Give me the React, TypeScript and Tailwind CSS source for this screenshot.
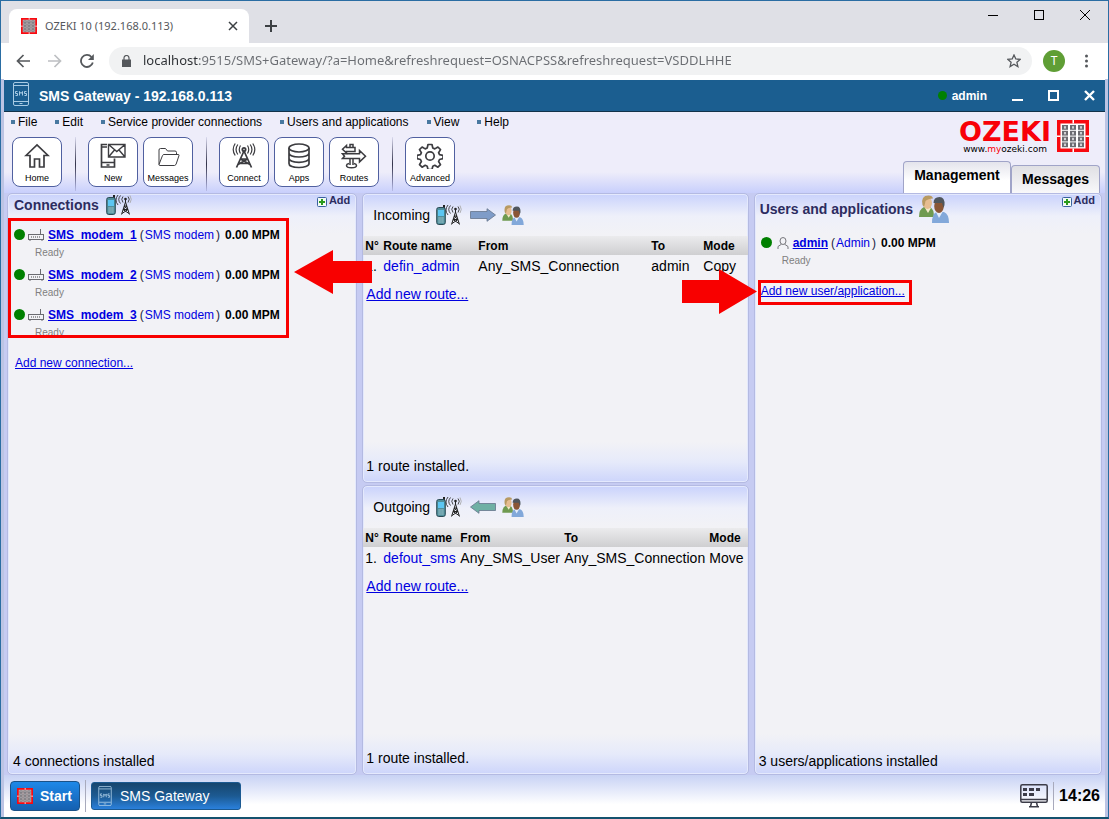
import React from 'react';

const BLUE_LINK = 'text-[#0000e0] underline';

function GridLogo({ className, inner = '#fff' }: { className: string; inner?: string }) {
  const cols = [5, 13, 21];
  const rows = [5, 10.8, 16.6, 22.4];
  return (
    <svg className={className} viewBox="0 0 32 32">
      <rect width="32" height="32" fill="#f80a10" />
      <rect x="3.5" y="3.5" width="25" height="25" fill={inner} />
      <path d="M15.500 0h1.500v3.500h-1.500zM15.500 28.500h1.500V32h-1.500zM0 15.500h3.500v1.500H0zM28.500 15.500H32v1.500h-3.500z" fill="#fff" />
      {rows.map((y) =>
        cols.map((x) => (
          <g key={`${x}-${y}`}>
            <rect x={x} y={y} width="6" height="4.8" fill="#6c6c72" />
            <rect x={x + 2} y={y + 1.2} width="2" height="2.4" fill="#d0d0d4" />
          </g>
        )),
      )}
    </svg>
  );
}

function SmsPhone({ className }: { className: string }) {
  return (
    <svg className={className} viewBox="0 0 16 24" fill="none" stroke="#a9cbe4" strokeWidth="1">
      <rect x="0.5" y="0.5" width="15" height="23" rx="1.5" />
      <path d="M1 3.5h14M1 19.5h14M6.5 21.5h3" />
      <path d="M4.500 9.500h-2v2h2v2h-2M6.500 13.500v-4l1.500 2 1.500-2v4M13.500 9.500h-2v2h2v2h-2" />
    </svg>
  );
}

function AntennaIcon() {
  return (
    <svg className="h-5 w-[26px] shrink-0" viewBox="0 0 26 20" fill="none">
      <path d="M8 0v4" stroke="#222" strokeWidth="2" />
      <rect x="0.700" y="2.500" width="8.600" height="17" rx="2" fill="#4f8f9c" stroke="#2b4a55" />
      <rect x="2" y="5" width="6" height="6" fill="#5cc6f2" />
      <path d="M2.500 13h5M2.500 15h5M2.500 17h5" stroke="#c7dde0" strokeDasharray="1.200 0.700" />
      <path d="M17 1.500q-2.500 2.500 0 6M14.500 0.500q-3.500 4 0 8M12 0q-4 5 0 10M22 1.500q2.500 2.500 0 6" stroke="#333" strokeWidth="0.900" />
      <path d="M24 .5q2.500 4 0 7.500" stroke="#aaa" strokeWidth="0.900" />
      <path d="M19.500 3v4M19.500 7l-4 12.500M19.500 7l4 12.500M18 11h3M17 14.500h5M18 11l4 3.500-6 4M21 11l-4 3.500 6 4" stroke="#222" strokeWidth="1" />
      <circle cx="19.500" cy="4" r="1.300" fill="#222" />
    </svg>
  );
}

function PeopleIcon({ className }: { className: string }) {
  return (
    <svg className={className} viewBox="0 0 30 28">
      <path d="M0 22q0-8 5-10h6q4 2 4 10z" fill="#6f9a50" />
      <path d="M6 13l3 5 3-5z" fill="#f3e9c8" />
      <ellipse cx="8.500" cy="8" rx="4.500" ry="6" fill="#e6bd91" />
      <path d="M3.500 10q-2-9.500 6-9.500 4 0 4.500 3-5 0-7.500 2.500-.5 3-1.500 6z" fill="#b89a62" />
      <path d="M13 28q0-10 5-11h7q5 2 5 11z" fill="#82a8da" />
      <path d="M17 17l3 6 3.500-6z" fill="#e6eefb" />
      <ellipse cx="20" cy="11" rx="4.800" ry="7" fill="#8a5636" />
      <path d="M14.500 8q0-6 6-6 5.500 0 5 8l-1 3-1.500-5q-5 0-8.500 0z" fill="#50565c" />
    </svg>
  );
}

function FlowArrow({ color, left }: { color: string; left?: boolean }) {
  return (
    <svg className="h-3.5 w-[26px] shrink-0" viewBox="0 0 26 14">
      <path
        d={left ? 'M.5 7L9 .7V3.500h16.500v7H9v2.800z' : 'M25.500 7L17 .7V3.500H.5v7H17v2.800z'}
        fill={color}
        stroke="#64748b"
        strokeWidth="0.800"
      />
    </svg>
  );
}

function ModemIcon() {
  return (
    <svg className="h-3 w-4 shrink-0" viewBox="0 0 16 12" fill="none" stroke="#6b6b70">
      <rect x="0.500" y="5.500" width="15" height="5" />
      <path d="M12.500 0v5M2 11v1M14 11v1" />
      <path d="M3 8h10" stroke="#444" strokeDasharray="1 1" />
    </svg>
  );
}

const drawings: Record<string, React.ReactNode> = {
  Home: <path d="M2 12.500L13 2l11 10.500h-4V24h-4.500v-8h-5v8H6V12.500z" />,
  New: (
    <>
      <path d="M7 1.500H1.500v22.500h13V15.500M1.500 19.500h13M6.500 22h3M1.500 4H7" />
      <path d="M8.500 1.500h16.500v12.500H8.500zM8.500 1.500l8.300 7 8.200-7M8.500 14l6-7M25 14l-6-7" strokeWidth="1.400" />
    </>
  ),
  Messages: (
    <path d="M4 21.500V7q0-1.500 1.500-1.500h5l2 2.500h7.500q1.500 0 1.500 1.500V12M4 21.500q0 1 1 1h14.500l1.500-1L24 12.500q.3-1-1-1H9q-1 0-1.500 1L4 21.500" strokeWidth="1" />
  ),
  Connect: (
    <>
      <path d="M5.500 24.500L13 8l7.500 16.500M9.500 16h7M7.500 20.500h11M9.500 16l9.500 5.500M16.500 16L7 21.500" />
      <circle cx="13" cy="6.500" r="1.700" />
      <path d="M9.500 2.500q-2.500 4 0 8M6.800 1.500q-3.500 5 0 10M4.200.5q-4 6 0 12M16.500 2.500q2.500 4 0 8M19.200 1.500q3.500 5 0 10M21.800.5q4 6 0 12" strokeWidth="1.200" />
    </>
  ),
  Apps: (
    <>
      <ellipse cx="13" cy="5" rx="10" ry="4" />
      <path d="M3 5v15.500c0 5.300 20 5.300 20 0V5M3 10c0 5.300 20 5.300 20 0M3 15.300c0 5.300 20 5.300 20 0" />
    </>
  ),
  Routes: (
    <g strokeWidth="1.500">
      <path d="M9 4V1.500h3V4M9 16v6M12 16v6" />
      <path d="M14 4.500H5.500V2.500L1.500 6.200l4 3.800V8.500H14z" />
      <path d="M1.500 10.800h17V7.500l6 5.700-6 5.700v-3.400h-17l2-2.300z" />
      <path d="M8 20.500q-2.500.7-2.500 2 0 2.300 5 2.300t5-2.300q0-1.300-2.500-2" />
    </g>
  ),
  Advanced: (
    <>
      <circle cx="13" cy="13" r="4.200" />
      <path d="M11 1.500h4l.8 3.500 2 .9 3.100-1.900 2.600 2.600-1.900 3.100.9 2 3.500.6v3.400l-3.500.8-.9 2 1.900 3.100-2.600 2.600-3.100-1.900-2 .9-.8 3.300h-4l-.8-3.300-2-.9-3.100 1.900-2.600-2.600 1.900-3.100-.9-2-3.500-.8v-3.400l3.500-.6.9-2-1.900-3.100 2.600-2.600 3.100 1.900 2-.9z" strokeLinejoin="round" />
    </>
  ),
};

function ToolButton({ name }: { name: string }) {
  return (
    <button className="flex h-[50px] w-[50px] flex-col items-center rounded-lg border border-[#5060a0] bg-white pt-[5px]">
      <svg className="h-[26px] w-[26px]" viewBox="0 0 26 26" fill="none" stroke="#3c3c40" strokeWidth="1.700">
        {drawings[name]}
      </svg>
      <span className="mt-1 text-[9px] leading-[11px] text-black">{name}</span>
    </button>
  );
}

function Separator() {
  return <div className="mr-3 ml-[13px] h-[54px] w-px bg-linear-to-b from-[#dcdcf0] via-[#33334a] to-[#b8bce8]" />;
}

const menu = ['File', 'Edit', 'Service provider connections', 'Users and applications', 'View', 'Help'];
const toolGroups = [['Home'], ['New', 'Messages'], ['Connect', 'Apps', 'Routes'], ['Advanced']];

function Panel({ children }: { children: React.ReactNode }) {
  return (
    <section className="relative flex min-w-0 flex-col rounded-[5px] border border-[#b4bae2] bg-[linear-gradient(#c9d2fc,#eef0fa_22px,#f2f2f6_40px,#f2f2f6_calc(100%-40px),#e6eafa_calc(100%-20px),#cdd5fb)] shadow-[inset_0_0_0_1px_#e4e9fd]">
      {children}
    </section>
  );
}

function AddButton() {
  return (
    <button className="flex items-start gap-0.5 text-[11px] leading-3 font-bold text-[#2c2c60]">
      <svg className="mt-[3px] h-[10px] w-[10px]" viewBox="0 0 10 10">
        <rect x="0.500" y="0.500" width="9" height="9" rx="1" fill="#f4fbf4" stroke="#3a62a0" />
        <path d="M5 2v6M2 5h6" stroke="#2a9a1c" strokeWidth="2" />
      </svg>
      Add
    </button>
  );
}

function Entry({ name, type, icon }: { name: string; type: string; icon: React.ReactNode }) {
  return (
    <li className="h-10">
      <div className="flex h-5 items-center">
        <span className="mr-[3px] mb-0.5 h-[11px] w-[11px] shrink-0 rounded-full bg-[#008000]" />
        {icon}
        <a href="#" className="ml-1 font-bold text-[#0000e0] underline">{name}</a>
        <span className="ml-[3px] flex gap-px text-[#202040]">
          (<a href="#" className="text-[#0000e0]">{type}</a>
          <span className="ml-px">)</span>
        </span>
        <b className="ml-[5px] text-black">0.00 MPM</b>
      </div>
      <p className="ml-[21px] text-[10px] leading-4 text-[#808080]">Ready</p>
    </li>
  );
}

interface Route {
  title: string;
  arrow: React.ReactNode;
  widths: string[];
  cells: string[];
}

const routes: Route[] = [
  {
    title: 'Incoming',
    arrow: <FlowArrow color="#7f9cc8" />,
    widths: ['w-[18px]', 'w-[95px]', 'w-[173px]', 'w-[52px]', ''],
    cells: ['1.', 'defin_admin', 'Any_SMS_Connection', 'admin', 'Copy'],
  },
  {
    title: 'Outgoing',
    arrow: <FlowArrow color="#6fb0a4" left />,
    widths: ['w-[18px]', 'w-[77px]', 'w-[104px]', 'w-[145px]', ''],
    cells: ['1.', 'defout_sms', 'Any_SMS_User', 'Any_SMS_Connection', 'Move'],
  },
];

function RoutePanel({ route }: { route: Route }) {
  return (
    <Panel>
      <h2 className="flex h-[42px] items-center gap-1.5 pl-2.5 text-sm text-black">
        {route.title}
        <AntennaIcon />
        <span className="ml-0.5 flex">{route.arrow}</span>
        <PeopleIcon className="h-5 w-[22px]" />
      </h2>
      <table className="w-full table-fixed text-left whitespace-nowrap text-black">
        <thead className="bg-linear-to-b from-[#ebebed] to-[#cfcfd1] text-xs">
          <tr className="h-[19px]">
            {['N°', 'Route name', 'From', 'To', 'Mode'].map((head, i) => (
              <th key={head} className={`${route.widths[i]} p-0 pl-0.5`}>{head}</th>
            ))}
          </tr>
        </thead>
        <tbody className="text-sm">
          <tr className="h-[22px]">
            {route.cells.map((cell, i) => (
              <td key={i} className="p-0 pl-0.5">
                {i === 1 ? <a href="#" className="text-[#0000e0]">{cell}</a> : cell}
              </td>
            ))}
          </tr>
        </tbody>
      </table>
      <a href="#" className={`mt-[7px] ml-[3px] self-start text-sm ${BLUE_LINK}`}>Add new route...</a>
      <p className="mt-auto mb-1.5 ml-[3px] text-sm text-black">1 route installed.</p>
    </Panel>
  );
}

function BrowserChrome() {
  return (
    <div className="font-['Noto_Sans',sans-serif]">
      <div className="flex h-[42px] items-start bg-[#dfe0e6] pl-2">
        <div className="mt-2 flex h-[34px] w-60 items-center rounded-t-lg bg-white pr-[11px] pl-3">
          <GridLogo className="h-4 w-4" inner="#c4b4b6" />
          <span className="ml-2 flex-1 text-[11px] text-[#55585c]">OZEKI 10 (192.168.0.113)</span>
          <button aria-label="Close tab">
            <svg className="h-2.5 w-2.5" viewBox="0 0 10 10" stroke="#3c4043" strokeWidth="1.500">
              <path d="M1 1l8 8M9 1l-8 8" />
            </svg>
          </button>
        </div>
        <button aria-label="New tab" className="mt-[19px] ml-4">
          <svg className="h-3 w-3" viewBox="0 0 12 12" stroke="#3c4043" strokeWidth="2">
            <path d="M6 0v12M0 6h12" />
          </svg>
        </button>
        <div className="mt-[9px] mr-[18px] ml-auto flex gap-9">
          <button aria-label="Minimize">
            <svg className="h-2.5 w-2.5" viewBox="0 0 10 10" stroke="#000"><path d="M0 5.500h10" /></svg>
          </button>
          <button aria-label="Maximize">
            <svg className="h-2.5 w-2.5" viewBox="0 0 10 10" fill="none" stroke="#000"><rect x="0.500" y="0.500" width="9" height="9" /></svg>
          </button>
          <button aria-label="Close">
            <svg className="h-2.5 w-2.5" viewBox="0 0 10 10" stroke="#000"><path d="M0 0l10 10M10 0L0 10" /></svg>
          </button>
        </div>
      </div>
      <div className="flex h-9 items-center bg-white pr-5 pl-[15px]">
        <div className="flex gap-[18px]">
          <button aria-label="Back">
            <svg className="h-3.5 w-3.5" viewBox="0 0 14 14" fill="none" stroke="#55585c" strokeWidth="1.700"><path d="M14 7H1.500M7.500 1l-6 6 6 6" /></svg>
          </button>
          <button aria-label="Forward">
            <svg className="h-3.5 w-3.5" viewBox="0 0 14 14" fill="none" stroke="#bdbfc2" strokeWidth="1.700"><path d="M0 7h12.500M6.500 1l6 6-6 6" /></svg>
          </button>
          <button aria-label="Reload">
            <svg className="h-3.5 w-3.5" viewBox="0 0 14 14" fill="none" stroke="#55585c" strokeWidth="1.800">
              <path d="M12.800 8.500A6 6 0 1 1 11.500 3" />
              <path d="M13.800 0v6H8z" fill="#55585c" stroke="none" />
            </svg>
          </button>
        </div>
        <div className="ml-[15px] flex h-7 flex-1 items-center rounded-full bg-[#f1f2f3] pr-[11px] pl-[13px]">
          <svg className="h-3 w-[9px] shrink-0" viewBox="0 0 9 12" fill="#55585c">
            <path d="M0 4.500h9V12H0z" />
            <path d="M2 5V3a2.500 2.500 0 0 1 5 0v2" fill="none" stroke="#55585c" strokeWidth="1.200" />
          </svg>
          <input
            aria-label="Address"
            className="ml-3 min-w-0 flex-1 bg-[linear-gradient(90deg,#2c2f33_56px,#6a6d72_56px)] bg-clip-text text-[13px] text-transparent outline-none"
            defaultValue="localhost:9515/SMS+Gateway/?a=Home&refreshrequest=OSNACPSS&refreshrequest=VSDDLHHE"
          />
          <button aria-label="Bookmark">
            <svg className="h-3.5 w-3.5" viewBox="0 0 14 14" fill="none" stroke="#55585c" strokeWidth="1.300">
              <path d="M7 1l1.800 4 4.400.4-3.300 2.900 1 4.300L7 10.300l-3.900 2.300 1-4.300L.8 5.400 5.200 5z" />
            </svg>
          </button>
        </div>
        <button className="ml-[11px] h-[22px] w-[22px] rounded-full bg-[#5f9e35] text-xs text-white">T</button>
        <button aria-label="Browser menu" className="ml-5">
          <svg className="h-3.5 w-[3px]" viewBox="0 0 3 14" fill="#55585c">
            <circle cx="1.500" cy="2" r="1.500" /><circle cx="1.500" cy="7" r="1.500" /><circle cx="1.500" cy="12" r="1.500" />
          </svg>
        </button>
      </div>
    </div>
  );
}

function TitleBar() {
  return (
    <div className="flex h-8 items-center border-b border-[#12324a] bg-[#1b5e90] pr-2.5 pl-[9px] text-white">
      <SmsPhone className="mb-1 h-6 w-4" />
      <h1 className="ml-2.5 text-sm font-bold">SMS Gateway - 192.168.0.113</h1>
      <span className="mr-[5px] ml-auto h-[9px] w-[9px] rounded-full bg-[#008000]" />
      <span className="mr-[25px] text-xs font-bold">admin</span>
      <div className="flex gap-[25px]">
        <button aria-label="Minimize window">
          <svg className="h-[11px] w-[11px]" viewBox="0 0 11 11" stroke="#fff" strokeWidth="2"><path d="M0 10h11" /></svg>
        </button>
        <button aria-label="Maximize window">
          <svg className="h-[11px] w-[11px]" viewBox="0 0 11 11" fill="none" stroke="#fff" strokeWidth="2"><rect x="1" y="1" width="9" height="9" /></svg>
        </button>
        <button aria-label="Close window">
          <svg className="h-[11px] w-[11px]" viewBox="0 0 11 11" stroke="#fff" strokeWidth="2.400"><path d="M1 1l9 9M10 1l-9 9" /></svg>
        </button>
      </div>
    </div>
  );
}

function Header() {
  return (
    <header className="flex h-[81px] justify-between bg-[linear-gradient(#eeedfa_60px,#c8cffc)] pr-[5px] pl-[7px]">
      <div>
        <nav className="flex h-5 items-center gap-[18px]">
          {menu.map((item) => (
            <a key={item} href="#" className="flex items-center gap-[3px] text-xs text-black">
              <span className="h-1 w-1 bg-[#4878a0]" />
              {item}
            </a>
          ))}
        </nav>
        <div className="mt-[5px] ml-px flex">
          {toolGroups.map((group, i) => (
            <React.Fragment key={i}>
              {i > 0 && <Separator />}
              <div className="flex gap-[5px]">
                {group.map((name) => <ToolButton key={name} name={name} />)}
              </div>
            </React.Fragment>
          ))}
        </div>
      </div>
      <div className="flex flex-col items-end justify-between">
        <div className="mt-2 mr-[11px] flex gap-1.5">
          <div className="flex flex-col items-center font-['DejaVu_Sans',sans-serif]">
            <div className="text-[27px] leading-6 font-bold text-[#f80008]">OZEKI</div>
            <div className="text-[9px] leading-[11px] text-black">www.<span className="text-[#f80008]">my</span>ozeki.com</div>
          </div>
          <GridLogo className="h-8 w-8" />
        </div>
        <div role="tablist" className="flex items-end text-sm font-bold text-black">
          <button role="tab" aria-selected="true" className="h-8 w-[108px] rounded-t border border-b-0 border-[#a0a4c8] bg-linear-to-b from-[#e4e4ec] to-white to-60% pb-1.5">
            Management
          </button>
          <button role="tab" aria-selected="false" className="h-7 w-[89px] rounded-t border border-b-0 border-[#a0a4c8] bg-linear-to-b from-[#e0e0e4] to-[#f8f8fa] pb-0.5">
            Messages
          </button>
        </div>
      </div>
    </header>
  );
}

export default function App() {
  return (
    <div className="flex min-h-screen flex-col border border-b-2 border-[#2a6da3] border-b-[#14526e] bg-white font-['Liberation_Sans',Arial,sans-serif] text-xs">
      <BrowserChrome />
      <div className="flex flex-1 flex-col border-r-[3px] border-l-[3px] border-[#bcc4e4] pt-px">
        <TitleBar />
        <Header />
        <main className="grid flex-1 grid-cols-[350fr_386fr_348fr] gap-[5px] bg-[#c6cbf2] pr-[3px] pl-[3px]">
          <Panel>
            <div className="flex h-6 items-start justify-between pr-1.5 pl-1.5">
              <h2 className="flex items-center gap-[7px] pt-px text-sm font-bold text-[#2c2c60]">
                Connections <AntennaIcon />
              </h2>
              <AddButton />
            </div>
            <ul className="mt-[7px] ml-1.5 h-[110px] overflow-hidden">
              {[1, 2, 3].map((n) => (
                <Entry key={n} name={`SMS_modem_${n}`} type="SMS modem" icon={<ModemIcon />} />
              ))}
            </ul>
            <a href="#" className={`mt-5 ml-[7px] self-start ${BLUE_LINK}`}>Add new connection...</a>
            <p className="mt-auto mb-[3px] ml-[5px] text-sm text-black">4 connections installed</p>
            <div className="absolute top-6 left-0 h-[120px] w-[281px] border-[3px] border-[#f80000]" />
            <svg className="absolute top-14 -right-4 z-10 h-11 w-[78px]" viewBox="0 0 78 44" fill="#f80000">
              <path d="M0 22L39 0v11h39v22H39v11z" />
            </svg>
          </Panel>

          <div className="grid min-w-0 grid-rows-2 gap-0.5">
            {routes.map((route) => <RoutePanel key={route.title} route={route} />)}
          </div>

          <Panel>
            <div className="flex h-8 items-start justify-between pr-1.5 pl-[5px]">
              <h2 className="flex items-center gap-1.5 pt-px text-sm font-bold text-[#2c2c60]">
                Users and applications <PeopleIcon className="h-7 w-[30px]" />
              </h2>
              <AddButton />
            </div>
            <ul className="mt-[7px] ml-1.5">
              <Entry
                name="admin"
                type="Admin"
                icon={
                  <svg className="ml-0.5 h-3 w-3 shrink-0" viewBox="0 0 12 12" fill="none" stroke="#77777c">
                    <ellipse cx="6" cy="4" rx="3" ry="3.500" />
                    <path d="M4.500 7.200L1 9.500v2.500M7.500 7.200L11 9.500v2.500" />
                  </svg>
                }
              />
            </ul>
            <a href="#" className={`mt-2.5 ml-1.5 self-start ${BLUE_LINK}`}>Add new user/application...</a>
            <p className="mt-auto mb-[3px] ml-1 text-sm text-black">3 users/applications installed</p>
            <div className="absolute top-[86px] left-[3px] h-[25px] w-[154px] border-[3px] border-[#f80000]" />
            <svg className="absolute top-[75px] -left-[73px] z-10 h-[45px] w-[75px]" viewBox="0 0 75 45" fill="#f80000">
              <path d="M75 22.500L37 0v11H0v23h37v11z" />
            </svg>
          </Panel>
        </main>
        <footer className="flex h-[42px] items-center bg-linear-to-b from-[#c8d2f4] to-white to-70% pr-[5px] pl-1.5">
          <button className="flex h-[30px] w-[70px] items-center gap-[7px] rounded border border-[#1a5288] bg-linear-to-b from-[#1e88e8] to-[#1560b0] pl-1.5 text-sm font-bold text-white">
            <GridLogo className="h-4 w-4" inner="#c4b4b6" />
            Start
          </button>
          <div className="mx-[5px] h-8 w-px bg-[#a8aabc]" />
          <button className="flex h-7 w-[150px] items-center gap-2 rounded-[3px] border border-[#1c5a92] bg-linear-to-b from-[#17466e] via-[#1c5a92] to-[#2a80dc] pl-1.5 text-sm text-white">
            <SmsPhone className="h-5 w-3.5" />
            SMS Gateway
          </button>
          <svg className="ml-auto h-6 w-7" viewBox="0 0 28 24" fill="none" stroke="#3c3c48" strokeWidth="1.500">
            <rect x="0.800" y="0.800" width="26.400" height="17.400" rx="1.500" />
            <path d="M1 15.500h26M11.500 18.500l-1 4M16.500 18.500l1 4M9 22.800h10" />
            <path d="M3 4h4v3H3zM9 4h5v3H9zM16 4h4v3h-4zM3 9h4v3H3zM9 9h5v3H9z" fill="#3c3c48" stroke="none" />
          </svg>
          <div className="mx-[5px] h-7 w-px bg-[#a8aabc]" />
          <time className="text-base font-bold text-black">14:26</time>
        </footer>
      </div>
    </div>
  );
}
